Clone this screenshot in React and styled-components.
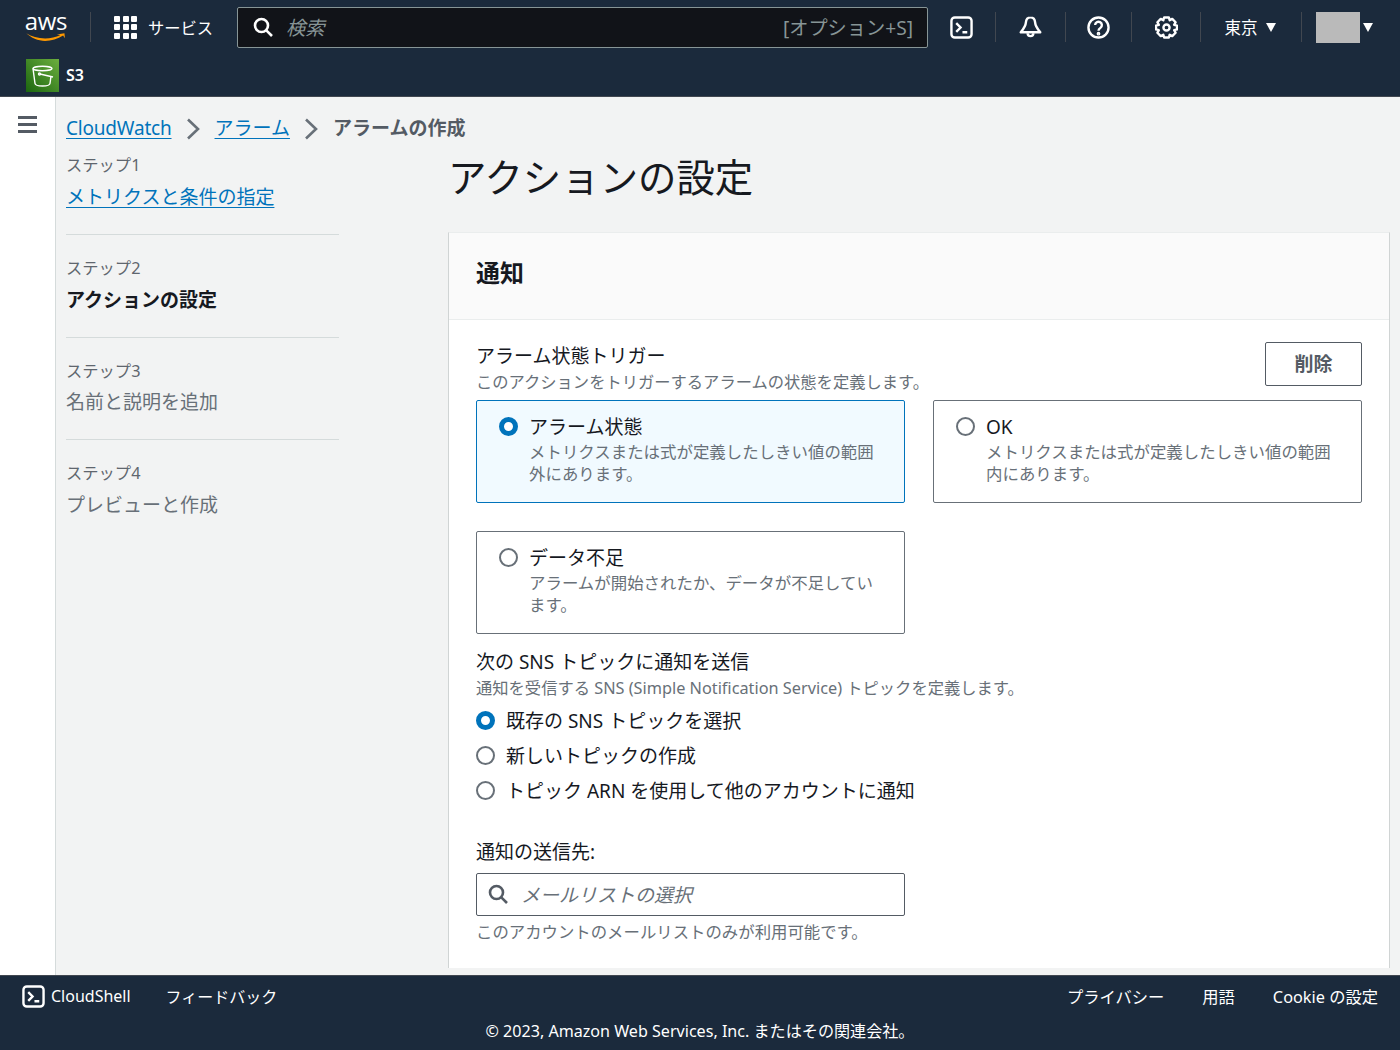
import React from 'react';
import styled, { createGlobalStyle } from 'styled-components';

const GlobalStyle = createGlobalStyle`
  html, body { margin: 0; padding: 0; }
  body {
    font-family: "Noto Sans", "Noto Sans CJK JP", sans-serif;
    color: #16191f;
    background: #f2f3f3;
  }
  * { box-sizing: border-box; }
`;

const TerminalIcon = ({ size = 23 }) => (
  <svg width={size} height={size} viewBox="0 0 24 24" fill="none" stroke="#fff" strokeWidth="2.500">
    <rect x="1.500" y="1.500" width="21" height="21" rx="3.500" />
    <path d="M6.500 7.500l4.500 4.500-4.500 4.500M13 17h5" />
  </svg>
);

const BellIcon = () => (
  <svg width="23" height="24" viewBox="0 0 24 24" fill="none" stroke="#fff" strokeWidth="2.500" strokeLinejoin="round">
    <path d="M12 2c-2.800 0-4.600 2.300-4.800 5.200C7 10.800 4.800 14 1.800 17.500h20.400C19.200 14 17 10.800 16.800 7.200 16.600 4.300 14.800 2 12 2z" />
    <path d="M9 18.500a3 3 0 0 0 6 0" />
  </svg>
);

const HelpIcon = () => (
  <svg width="23" height="23" viewBox="0 0 24 24" fill="none" stroke="#fff" strokeWidth="2.500">
    <circle cx="12" cy="12" r="10.500" />
    <path d="M8.500 9.500a3.500 3.500 0 1 1 5.500 2.900c-1.300.9-2 1.400-2 3" />
    <circle cx="12" cy="18.500" r="0.700" fill="#fff" />
  </svg>
);

const GearIcon = () => (
  <svg width="23" height="23" viewBox="0 0 24 24" fill="none" stroke="#fff" strokeWidth="2.500" strokeLinejoin="round">
    <path d="M9.500 1.500h5l.8 3 2.700-1.500 3.500 3.500-1.500 2.700 3 .8v4l-3 .8 1.500 2.700-3.500 3.500-2.700-1.500-.8 3h-5l-.8-3-2.700 1.500-3.500-3.500 1.500-2.700-3-.8v-4l3-.8-1.500-2.700 3.500-3.500 2.700 1.500z" />
    <circle cx="12" cy="12" r="3.200" />
  </svg>
);

const SearchIcon = ({ size = 20, color = '#fff' }) => (
  <svg width={size} height={size} viewBox="0 0 20 20" fill="none" stroke={color} strokeWidth="2.600">
    <circle cx="8.500" cy="8.500" r="6.500" />
    <path d="M13.300 13.300l5.700 5.700" />
  </svg>
);

const Chevron = () => (
  <svg width="14" height="22" viewBox="0 0 14 22" fill="none" stroke="#687078" strokeWidth="2.600">
    <path d="M2 1.500l10 9.500-10 9.500" />
  </svg>
);

const BucketIcon = () => (
  <svg width="24" height="24" viewBox="0 0 24 24" fill="none" stroke="#fff" strokeWidth="1.400">
    <ellipse cx="11.500" cy="4.500" rx="9.500" ry="2.200" />
    <path d="M2 4.500l2 15c.2 1.700 3.500 2.500 7.500 2.500s7.300-.8 7.500-2.500l1-7.500" />
    <path d="M9 10l13 3" />
    <circle cx="8.500" cy="10" r="1" />
  </svg>
);

const steps = [
  { step: 'ステップ1', label: 'メトリクスと条件の指定', state: 'link' },
  { step: 'ステップ2', label: 'アクションの設定', state: 'active' },
  { step: 'ステップ3', label: '名前と説明を追加', state: 'disabled' },
  { step: 'ステップ4', label: 'プレビューと作成', state: 'disabled' },
];

const tiles = [
  { title: 'アラーム状態', desc: 'メトリクスまたは式が定義したしきい値の範囲外にあります。', checked: true },
  { title: 'OK', desc: 'メトリクスまたは式が定義したしきい値の範囲内にあります。' },
  { title: 'データ不足', desc: 'アラームが開始されたか、データが不足しています。' },
];

const topics = [
  { label: '既存の SNS トピックを選択', checked: true },
  { label: '新しいトピックの作成' },
  { label: 'トピック ARN を使用して他のアカウントに通知' },
];

export default function App() {
  return (
    <Page>
      <GlobalStyle />
      <Header>
        <TopRow>
          <Logo>
            <LogoText>aws</LogoText>
            <svg width="44" height="10" viewBox="0 0 44 10" fill="#f90">
              <path d="M0 1.500c6 3.500 13 5.700 21 5.700 6 0 12-1.200 17-3.800l-4-.5 8.500-1.500.5 5.500-2-3C35 7.500 28 10 21 10 13 10 5.500 6.500 0 1.500z" />
            </svg>
          </Logo>
          <Divider />
          <Services>
            <Dots>{Array.from({ length: 9 }).map((_, i) => <i key={i} />)}</Dots>
            サービス
          </Services>
          <SearchBox>
            <SearchIcon />
            <SearchPlaceholder>検索</SearchPlaceholder>
            <Shortcut>[オプション+S]</Shortcut>
          </SearchBox>
          <IconCell $w={67}><TerminalIcon /></IconCell>
          <Divider />
          <IconCell $w={69}><BellIcon /></IconCell>
          <Divider />
          <IconCell $w={65}><HelpIcon /></IconCell>
          <Divider />
          <IconCell $w={68}><GearIcon /></IconCell>
          <Divider />
          <Region>東京<Caret /></Region>
          <Divider />
          <Account><Avatar /><Caret /></Account>
        </TopRow>
        <ServiceRow>
          <ServiceBadge><BucketIcon /></ServiceBadge>
          <ServiceName>S3</ServiceName>
        </ServiceRow>
      </Header>

      <Body>
        <Rail>
          <Burger><i /><i /><i /></Burger>
        </Rail>
        <Content>
          <Crumbs>
            <CrumbLink $tight>CloudWatch</CrumbLink>
            <Chevron />
            <CrumbLink>アラーム</CrumbLink>
            <Chevron />
            <CrumbCurrent>アラームの作成</CrumbCurrent>
          </Crumbs>
          <Columns>
            <Steps>
              {steps.map((s) => (
                <StepItem key={s.step}>
                  <StepNumber>{s.step}</StepNumber>
                  <StepLabel $state={s.state}>{s.label}</StepLabel>
                </StepItem>
              ))}
            </Steps>
            <Main>
              <Title>アクションの設定</Title>
              <Card>
                <CardHeader>通知</CardHeader>
                <CardBody>
                  <TriggerHead>
                    <div>
                      <FieldLabel>アラーム状態トリガー</FieldLabel>
                      <Hint>このアクションをトリガーするアラームの状態を定義します。</Hint>
                    </div>
                    <DeleteButton>削除</DeleteButton>
                  </TriggerHead>
                  <Tiles>
                    {tiles.map((t) => (
                      <Tile key={t.title} $checked={t.checked}>
                        <Radio $checked={t.checked} />
                        <div>
                          <TileTitle>{t.title}</TileTitle>
                          <TileDesc>{t.desc}</TileDesc>
                        </div>
                      </Tile>
                    ))}
                  </Tiles>
                  <SnsBlock>
                    <FieldLabel>次の SNS トピックに通知を送信</FieldLabel>
                    <Hint>通知を受信する SNS (Simple Notification Service) トピックを定義します。</Hint>
                    <RadioList>
                      {topics.map((t) => (
                        <RadioRow key={t.label}>
                          <Radio $checked={t.checked} />
                          {t.label}
                        </RadioRow>
                      ))}
                    </RadioList>
                  </SnsBlock>
                  <SendTo>
                    <FieldLabel>通知の送信先:</FieldLabel>
                    <SelectBox>
                      <SearchIcon color="#545b64" />
                      <SelectPlaceholder>メールリストの選択</SelectPlaceholder>
                    </SelectBox>
                    <Constraint>このアカウントのメールリストのみが利用可能です。</Constraint>
                  </SendTo>
                </CardBody>
              </Card>
            </Main>
          </Columns>
        </Content>
      </Body>

      <Footer>
        <FooterRow>
          <FooterLeft>
            <ShellLink><TerminalIcon />CloudShell</ShellLink>
            <span>フィードバック</span>
          </FooterLeft>
          <FooterRight>
            <span>プライバシー</span>
            <span>用語</span>
            <span>Cookie の設定</span>
          </FooterRight>
        </FooterRow>
        <Copyright>© 2023, Amazon Web Services, Inc. またはその関連会社。</Copyright>
      </Footer>
    </Page>
  );
}

const Page = styled.div`
  width: 1400px;
  height: 1050px;
  display: flex;
  flex-direction: column;
  overflow: hidden;
`;

const Header = styled.header`
  height: 97px;
  flex: none;
  background: #1b2a3c;
  border-bottom: 1px solid #414750;
  color: #fff;
`;

const TopRow = styled.div`
  height: 54px;
  display: flex;
  align-items: center;
  padding-left: 24px;
`;

const Logo = styled.div`
  width: 44px;
  margin-right: 22px;
  display: flex;
  flex-direction: column;
  align-items: center;
  height: 31px;
  margin-top: -3px;
`;

const LogoText = styled.span`
  font-family: "Open Sans", sans-serif;
  font-size: 24px;
  line-height: 22px;
  letter-spacing: -0.3px;
`;

const Divider = styled.span`
  width: 1px;
  height: 30px;
  flex: none;
  background: #414750;
`;

const Services = styled.div`
  display: flex;
  align-items: center;
  gap: 11px;
  margin-left: 23px;
  width: 123px;
  flex: none;
  font-size: 16.300px;
`;

const Dots = styled.div`
  display: grid;
  grid-template-columns: repeat(3, 6px);
  grid-auto-rows: 6px;
  gap: 2.500px;
  i {
    background: #fff;
    border-radius: 1px;
  }
`;

const SearchBox = styled.div`
  width: 691px;
  height: 41px;
  flex: none;
  display: flex;
  align-items: center;
  padding: 0 14px 0 15px;
  background: #111318;
  border: 1px solid #879596;
  border-radius: 2px;
`;

const SearchPlaceholder = styled.span`
  margin-left: 13px;
  font-size: 19.300px;
  font-style: italic;
  color: #879596;
`;

const Shortcut = styled.span`
  margin-left: auto;
  font-size: 19.200px;
  color: #879596;
`;

const IconCell = styled.div`
  width: ${(p) => p.$w}px;
  flex: none;
  display: flex;
  justify-content: center;
`;

const Region = styled.div`
  width: 100px;
  flex: none;
  padding-right: 2px;
  display: flex;
  align-items: center;
  justify-content: center;
  gap: 8px;
  font-size: 16.500px;
`;

const Caret = styled.span`
  width: 0;
  height: 0;
  border-left: 5.500px solid transparent;
  border-right: 5.500px solid transparent;
  border-top: 9px solid #fff;
`;

const Account = styled.div`
  display: flex;
  align-items: center;
  gap: 3px;
  margin-left: 14px;
`;

const Avatar = styled.div`
  width: 44px;
  height: 31px;
  background: #bababa;
`;

const ServiceRow = styled.div`
  height: 42px;
  padding: 5px 0 0 26px;
  display: flex;
  align-items: flex-start;
  gap: 7px;
`;

const ServiceBadge = styled.div`
  width: 33px;
  height: 33px;
  display: flex;
  align-items: center;
  justify-content: center;
  background: linear-gradient(45deg, #1b660f, #6cae3e);
`;

const ServiceName = styled.span`
  font-size: 16px;
  font-weight: 600;
  line-height: 33px;
`;

const Body = styled.div`
  flex: 1;
  min-height: 0;
  display: flex;
`;

const Rail = styled.aside`
  width: 56px;
  flex: none;
  background: #fff;
  border-right: 1px solid #d5dbdb;
  padding: 19px 0 0 18px;
`;

const Burger = styled.div`
  width: 19px;
  display: flex;
  flex-direction: column;
  gap: 4px;
  i {
    height: 3px;
    background: #545b64;
  }
`;

const Content = styled.div`
  flex: 1;
  min-width: 0;
  padding: 0 10px 7px 10px;
  display: flex;
  flex-direction: column;
`;

const Crumbs = styled.nav`
  height: 56px;
  flex: none;
  padding-top: 18px;
  display: flex;
  align-items: flex-start;
  font-size: 19px;
  line-height: 26px;
  gap: 14.500px;
  svg { margin-top: 3px; }
`;

const CrumbLink = styled.a`
  color: #0073bb;
  text-decoration: underline;
  text-underline-offset: 3px;
  letter-spacing: ${(p) => (p.$tight ? '-0.2px' : '0')};
`;

const CrumbCurrent = styled.span`
  color: #545b64;
  font-weight: 700;
`;

const Columns = styled.div`
  flex: 1;
  min-height: 0;
  display: grid;
  grid-template-columns: 273px 1fr;
  column-gap: 109px;
`;

const Steps = styled.ol`
  list-style: none;
  margin: 0;
  padding: 0;
`;

const StepItem = styled.li`
  height: 102.500px;
  padding-top: 21px;
  border-top: 1px solid #d5dbdb;
  &:first-child {
    height: 81px;
    padding-top: 0;
    border-top: none;
  }
`;

const StepNumber = styled.div`
  font-size: 16.300px;
  line-height: 24px;
  color: #5f666e;
`;

const StepLabel = styled.div`
  margin-top: 6.500px;
  font-size: 19px;
  line-height: 26px;
  font-weight: ${(p) => (p.$state === 'active' ? 700 : 400)};
  color: ${(p) => (p.$state === 'link' ? '#0073bb' : p.$state === 'active' ? '#16191f' : '#687078')};
  text-decoration: ${(p) => (p.$state === 'link' ? 'underline' : 'none')};
  text-underline-offset: 3px;
`;

const Main = styled.main`
  display: flex;
  flex-direction: column;
  min-height: 0;
`;

const Title = styled.h1`
  margin: 0;
  height: 79px;
  font-size: 38.400px;
  line-height: 48px;
  font-weight: 400;
`;

const Card = styled.section`
  flex: 1;
  min-height: 0;
  background: #fff;
  border: 1px solid #d0d4d4;
  border-top-color: #eaeded;
  border-bottom: none;
  overflow: hidden;
`;

const CardHeader = styled.div`
  height: 87px;
  padding: 0 27px 9px;
  display: flex;
  align-items: center;
  background: #fafafa;
  border-bottom: 1px solid #eaeded;
  font-size: 24px;
  font-weight: 700;
`;

const CardBody = styled.div`
  padding: 22px 27px 0;
`;

const TriggerHead = styled.div`
  display: flex;
  justify-content: space-between;
  align-items: flex-start;
`;

const FieldLabel = styled.div`
  font-size: 19px;
  line-height: 29px;
`;

const Hint = styled.div`
  font-size: 16.300px;
  line-height: 22px;
  color: #687078;
`;

const DeleteButton = styled.button`
  width: 97px;
  height: 44px;
  padding: 0 0 2px;
  background: #fff;
  border: 1px solid #545b64;
  border-radius: 2px;
  font: inherit;
  font-size: 19px;
  font-weight: 700;
  color: #545b64;
`;

const Tiles = styled.div`
  margin-top: 7px;
  display: grid;
  grid-template-columns: 429px 429px;
  gap: 28px;
`;

const Tile = styled.div`
  height: 103px;
  display: flex;
  gap: 11px;
  padding: 13px 22px;
  background: ${(p) => (p.$checked ? '#f1faff' : '#fff')};
  border: 1px solid ${(p) => (p.$checked ? '#0073bb' : '#687078')};
  border-radius: 2px;
`;

const Radio = styled.span`
  width: 19px;
  height: 19px;
  flex: none;
  margin-top: 3px;
  border-radius: 50%;
  background: #fff;
  border: ${(p) => (p.$checked ? '5.500px solid #0073bb' : '2px solid #687078')};
`;

const TileTitle = styled.div`
  font-size: 19px;
  line-height: 27px;
`;

const TileDesc = styled.div`
  font-size: 16.450px;
  line-height: 22px;
  color: #687078;
`;

const SnsBlock = styled.div`
  margin-top: 14px;
`;

const RadioList = styled.div`
  margin-top: 7px;
  display: flex;
  flex-direction: column;
  gap: 7px;
`;

const RadioRow = styled.div`
  height: 28px;
  display: flex;
  align-items: center;
  gap: 11px;
  font-size: 19px;
  ${Radio} { margin-top: 0; }
`;

const SendTo = styled.div`
  margin-top: 34px;
`;

const SelectBox = styled.div`
  margin-top: 6px;
  width: 429px;
  height: 43px;
  display: flex;
  align-items: center;
  gap: 13px;
  padding: 0 11px 1px;
  border: 1px solid #545b64;
  border-radius: 2px;
`;

const SelectPlaceholder = styled.span`
  font-size: 19px;
  font-style: italic;
  color: #687078;
`;

const Constraint = styled.div`
  margin-top: 5px;
  font-size: 16.400px;
  line-height: 22px;
  color: #687078;
`;

const Footer = styled.footer`
  height: 75px;
  flex: none;
  background: #1b2a3c;
  border-top: 1px solid #414750;
  color: #fff;
  font-size: 16px;
`;

const FooterRow = styled.div`
  height: 40px;
  display: flex;
  align-items: center;
  justify-content: space-between;
  padding: 0 22px;
`;

const FooterLeft = styled.div`
  display: flex;
  align-items: center;
  gap: 35px;
`;

const ShellLink = styled.div`
  display: flex;
  align-items: center;
  gap: 6px;
`;

const FooterRight = styled.div`
  display: flex;
  gap: 38px;
  font-size: 16.300px;
`;

const Copyright = styled.div`
  margin-top: 4px;
  text-align: center;
  line-height: 22px;
  font-size: 16.100px;
`;
